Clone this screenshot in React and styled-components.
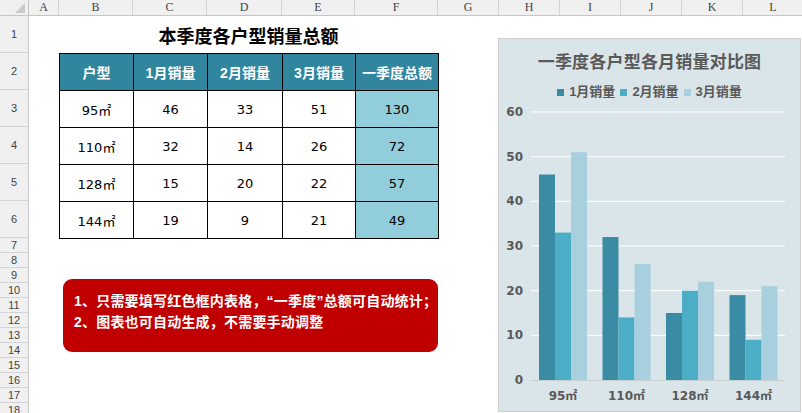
import React from 'react';
import styled, { createGlobalStyle } from 'styled-components';

const GlobalStyle = createGlobalStyle`
  html, body {
    margin: 0;
    padding: 0;
    background: #fff;
    overflow: hidden;
  }
`;

const cjk = `"Liberation Sans", "Noto Sans CJK SC", sans-serif`;

const columns = [
  { name: 'A', width: 30 },
  { name: 'B', width: 74 },
  { name: 'C', width: 74 },
  { name: 'D', width: 75 },
  { name: 'E', width: 73 },
  { name: 'F', width: 83 },
  { name: 'G', width: 61 },
  { name: 'H', width: 61 },
  { name: 'I', width: 61 },
  { name: 'J', width: 61 },
  { name: 'K', width: 61 },
  { name: 'L', width: 61 },
];

const tableCols = [74, 74, 75, 73, 83];

const rowHeights = [37, 37, 37, 37, 37, 37, 15, 15, 15, 15, 15, 15, 15, 15, 15, 15, 15, 15];

const data = [
  { type: '95㎡', m: [46, 33, 51] },
  { type: '110㎡', m: [32, 14, 26] },
  { type: '128㎡', m: [15, 20, 22] },
  { type: '144㎡', m: [19, 9, 21] },
];

const barColors = ['#3a8ca4', '#4badc6', '#a8cfdd'];

const Sheet = styled.div`
  width: 802px;
  height: 413px;
  overflow: hidden;
  display: flex;
  flex-direction: column;
`;

const ColHeaderBar = styled.div`
  display: flex;
  height: 16px;
  flex-shrink: 0;
  background: #f0f0f0;
  border-bottom: 1px solid #c6c6c6;
  box-sizing: border-box;
`;

const Corner = styled.div`
  width: 29px;
  flex-shrink: 0;
  position: relative;
  border-right: 1px solid #c6c6c6;
  box-sizing: border-box;
  &::after {
    content: '';
    position: absolute;
    right: 3px;
    bottom: 2px;
    border-left: 10px solid transparent;
    border-bottom: 10px solid #c9c9c9;
  }
`;

const ColHeader = styled.div`
  width: ${(p) => p.w}px;
  flex-shrink: 0;
  box-sizing: border-box;
  border-right: 1px solid #d4d4d4;
  font-family: "Liberation Serif", serif;
  font-size: 12px;
  color: #444;
  text-align: center;
  line-height: 15px;
`;

const Body = styled.div`
  display: flex;
  flex: 1;
`;

const RowHeaders = styled.div`
  width: 29px;
  flex-shrink: 0;
  background: #f0f0f0;
  border-right: 1px solid #c6c6c6;
  box-sizing: border-box;
  display: flex;
  flex-direction: column;
`;

const RowHeader = styled.div`
  height: ${(p) => p.h}px;
  flex-shrink: 0;
  box-sizing: border-box;
  border-bottom: 1px solid #d4d4d4;
  display: flex;
  align-items: center;
  justify-content: center;
  font-family: "Liberation Sans", sans-serif;
  font-size: 11px;
  color: #444;
`;

const Canvas = styled.div`
  position: relative;
  flex: 1;
  padding-left: 30px;
`;

const Title = styled.div`
  width: 379px;
  height: 37px;
  display: flex;
  align-items: center;
  justify-content: center;
  font-family: ${cjk};
  font-weight: bold;
  font-size: 18px;
  color: #000;
`;

const Table = styled.table`
  width: 380px;
  border-collapse: collapse;
  table-layout: fixed;
  font-family: "DejaVu Sans", "Noto Sans CJK SC", sans-serif;
`;

const Th = styled.th`
  height: 36px;
  padding: 0;
  border: 1px solid #000;
  background: #31859c;
  color: #fff;
  font-family: ${cjk};
  font-size: 14px;
  font-weight: bold;
  white-space: nowrap;
`;

const Td = styled.td`
  height: 36px;
  padding: 0;
  border: 1px solid #000;
  background: ${(p) => (p.total ? '#92cddc' : '#fff')};
  color: #000;
  text-align: center;
  font-size: 13px;
`;

const Note = styled.div`
  position: absolute;
  left: 34px;
  top: 263px;
  width: 375px;
  height: 73px;
  box-sizing: border-box;
  background: #c00000;
  border-radius: 9px;
  padding: 12px 0 0 11px;
  color: #fff;
  font-family: ${cjk};
  font-weight: bold;
  font-size: 14px;
  line-height: 21px;
  white-space: nowrap;
  letter-spacing: 0.2px;
`;

const Chart = styled.div`
  position: absolute;
  left: 469px;
  top: 22px;
  width: 303px;
  height: 374px;
  box-sizing: border-box;
  background: #dae5ea;
  border: 1px solid #d0d0d0;
  display: flex;
  flex-direction: column;
  align-items: center;
`;

const ChartTitle = styled.div`
  margin-top: 9px;
  font-family: ${cjk};
  font-weight: bold;
  font-size: 17px;
  color: #595959;
  letter-spacing: 0.2px;
`;

const Legend = styled.div`
  margin-top: 11px;
  display: flex;
  gap: 5px;
  font-family: ${cjk};
  font-weight: bold;
  font-size: 13px;
  color: #595959;
  line-height: 16px;
`;

const LegendItem = styled.span`
  display: flex;
  align-items: center;
  gap: 5px;
  &::before {
    content: '';
    width: 7px;
    height: 7px;
    background: ${(p) => p.color};
  }
`;

const Plot = styled.svg`
  position: absolute;
  left: 0;
  top: 0;
  font-family: "DejaVu Sans", "Noto Sans CJK SC", sans-serif;
`;

const unit = 4.467;
const baseY = 341;

const ChartPlot = () => (
  <Plot width="301" height="372">
    {[10, 20, 30, 40, 50, 60].map((v) => (
      <line key={v} x1="32" x2="286" y1={baseY - v * unit} y2={baseY - v * unit} stroke="#fff" strokeWidth="1" />
    ))}
    {[0, 10, 20, 30, 40, 50, 60].map((v) => (
      <text key={v} x="24" y={baseY - v * unit + 4} textAnchor="end" fontSize="12" fontWeight="bold" fill="#595959">
        {v}
      </text>
    ))}
    {data.map((d, i) =>
      d.m.map((v, j) => (
        <rect
          key={i + '-' + j}
          x={40 + i * 63.5 + j * 16}
          y={baseY - v * unit}
          width="16"
          height={v * unit}
          fill={barColors[j]}
        />
      ))
    )}
    <line x1="32" x2="286" y1={baseY + 0.5} y2={baseY + 0.5} stroke="#c8d0d4" strokeWidth="1" />
    {data.map((d, i) => (
      <text key={d.type} x={64 + i * 63.5} y="361" textAnchor="middle" fontSize="12" fontWeight="bold" fill="#595959">
        {d.type}
      </text>
    ))}
  </Plot>
);

export default function App() {
  let rowNo = 0;
  return (
    <>
      <GlobalStyle />
      <Sheet>
        <ColHeaderBar>
          <Corner />
          {columns.map((c) => (
            <ColHeader key={c.name} w={c.width}>{c.name}</ColHeader>
          ))}
        </ColHeaderBar>
        <Body>
          <RowHeaders>
            {rowHeights.map((h) => {
              rowNo += 1;
              return <RowHeader key={rowNo} h={h}>{rowNo}</RowHeader>;
            })}
          </RowHeaders>
          <Canvas>
            <Title>本季度各户型销量总额</Title>
            <Table>
              <colgroup>
                {tableCols.map((w, i) => (
                  <col key={i} style={{ width: w }} />
                ))}
              </colgroup>
              <thead>
                <tr>
                  <Th>户型</Th>
                  <Th>1月销量</Th>
                  <Th>2月销量</Th>
                  <Th>3月销量</Th>
                  <Th>一季度总额</Th>
                </tr>
              </thead>
              <tbody>
                {data.map((d) => (
                  <tr key={d.type}>
                    <Td>{d.type}</Td>
                    {d.m.map((v, j) => (
                      <Td key={j}>{v}</Td>
                    ))}
                    <Td total>{d.m[0] + d.m[1] + d.m[2]}</Td>
                  </tr>
                ))}
              </tbody>
            </Table>
            <Note>
              <div>1、只需要填写红色框内表格，“一季度”总额可自动统计；</div>
              <div>2、图表也可自动生成，不需要手动调整</div>
            </Note>
            <Chart>
              <ChartPlot />
              <ChartTitle>一季度各户型各月销量对比图</ChartTitle>
              <Legend>
                <LegendItem color={barColors[0]}>1月销量</LegendItem>
                <LegendItem color={barColors[1]}>2月销量</LegendItem>
                <LegendItem color={barColors[2]}>3月销量</LegendItem>
              </Legend>
            </Chart>
          </Canvas>
        </Body>
      </Sheet>
    </>
  );
}
